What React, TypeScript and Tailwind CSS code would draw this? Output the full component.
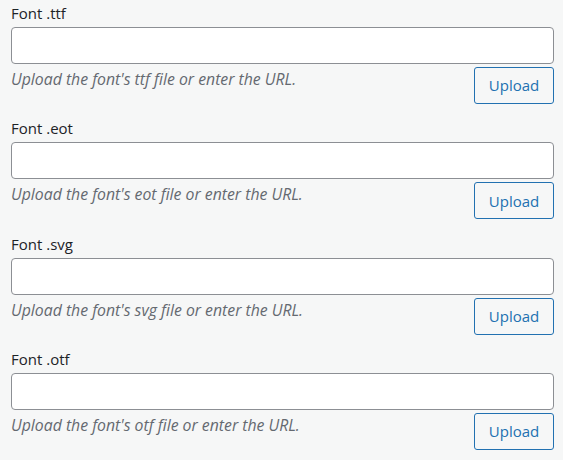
const fields = ['ttf', 'eot', 'svg', 'otf']

function FontField({ ext }: { ext: string }) {
  return (
    <div className="mb-[11.3px]">
      <label className="block pt-[2px] h-[27px] text-[15px] leading-[22px] text-[#1d2327]">Font .{ext}</label>
      <input
        type="text"
        className="block w-full h-[37px] bg-white border border-[#8c8f94] rounded-[4px] px-2 text-[14px] outline-none"
      />
      <div className="flex items-start justify-between mt-[3px]">
        <p className="pt-[1px] text-[15.8px] leading-[22px] italic text-[#646970]">
          Upload the font's {ext} file or enter the URL.
        </p>
        <button className="h-[37px] w-[80px] shrink-0 border border-[#2271b1] rounded-[3px] bg-[#f6f7f7] text-[15px] text-[#2271b1]">
          Upload
        </button>
      </div>
    </div>
  )
}

export default function App() {
  return (
    <div className="w-[563px] h-[460px] overflow-hidden bg-[#f6f7f7] pl-[11px] pr-[9px] font-['Segoe_UI','Open_Sans',sans-serif]">
      {fields.map((ext) => (
        <FontField key={ext} ext={ext} />
      ))}
    </div>
  )
}
